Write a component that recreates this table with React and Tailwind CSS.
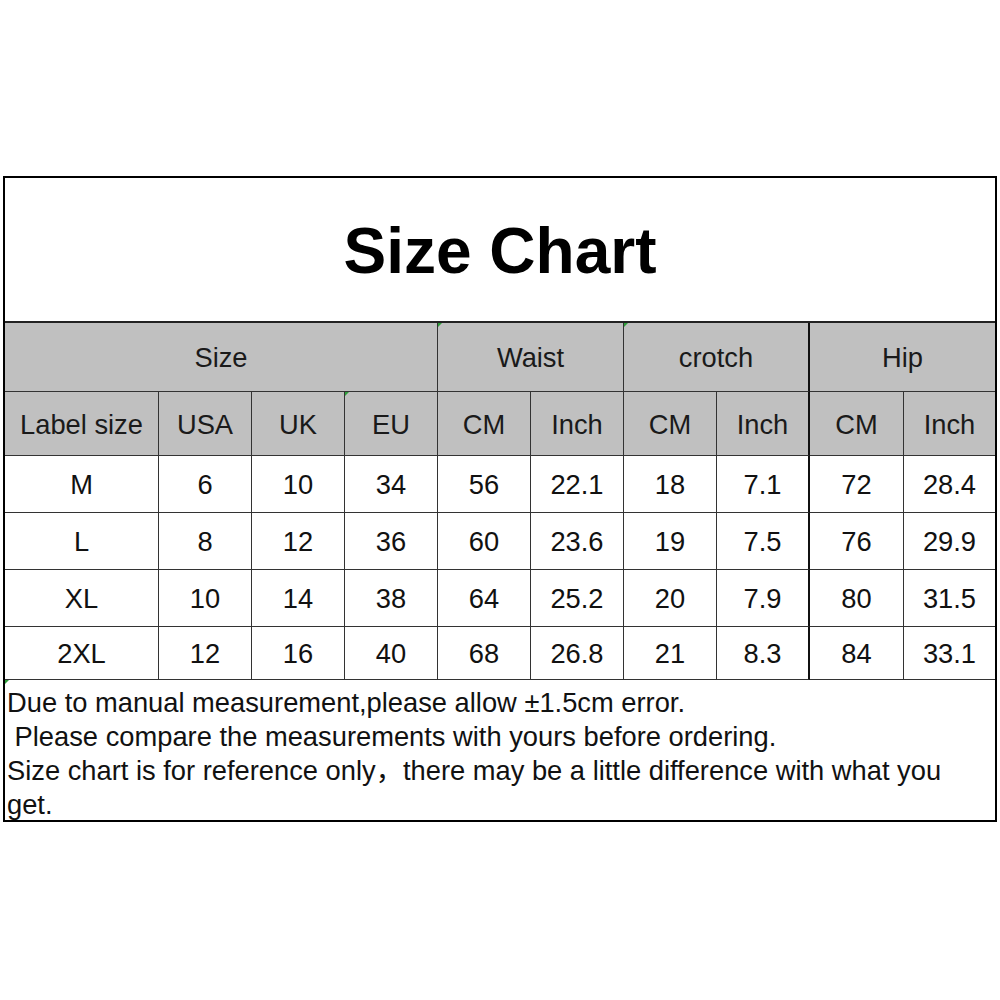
import React from 'react';

const cols = 'grid grid-cols-[154px_93px_93px_93px_93px_93px_93px_93px_94px_1fr]';

// Sub-header labels of the second header row
const subHeads = ['Label size', 'USA', 'UK', 'EU', 'CM', 'Inch', 'CM', 'Inch', 'CM', 'Inch'];

const rows = [
  { h: 'h-[57px]', v: ['M', '6', '10', '34', '56', '22.1', '18', '7.1', '72', '28.4'] },
  { h: 'h-[57px]', v: ['L', '8', '12', '36', '60', '23.6', '19', '7.5', '76', '29.9'] },
  { h: 'h-[57px]', v: ['XL', '10', '14', '38', '64', '25.2', '20', '7.9', '80', '31.5'] },
  { h: 'h-[53px]', v: ['2XL', '12', '16', '40', '68', '26.8', '21', '8.3', '84', '33.1'] },
];

// Tiny green spreadsheet comment marker
const Mark = () => (
  <span className="absolute left-0 top-0 w-0 h-0 border-t-[4px] border-r-[4px] border-t-[#2e9d3a] border-r-transparent" />
);

function cellBorder(i) {
  if (i === 9) return '';
  if (i === 7) return 'border-r-2 border-r-[#111]';
  return 'border-r border-r-[#333]';
}

export default function App() {
  return (
    <div className="w-[1000px] h-[1000px] bg-white pt-[176px] pl-[3px] font-['Liberation_Sans',Arial,'Noto_Sans_CJK_SC',sans-serif] text-[#111]">
      <div className="w-[994px] border-2 border-black">
        {/* Title */}
        <div className="h-[145px] border-b-2 border-[#222] flex items-center justify-center pt-[2px]">
          <h1 className="text-[64px] font-bold leading-none text-black">Size Chart</h1>
        </div>

        {/* Group header */}
        <div className={`${cols} h-[69px] bg-[#c0c0c0] text-[27.3px] text-[#1a1a1a]`}>
          <div className="col-span-4 flex items-center justify-center pt-[3px] border-r border-b border-[#333]">Size</div>
          <div className="relative col-span-2 flex items-center justify-center pt-[3px] border-r border-b border-[#333]">
            <Mark />
            Waist
          </div>
          <div className="relative col-span-2 flex items-center justify-center pt-[3px] border-r-2 border-r-[#111] border-b border-b-[#333]">
            <Mark />
            crotch
          </div>
          <div className="col-span-2 flex items-center justify-center pt-[3px] border-b border-[#333]">Hip</div>
        </div>

        {/* Sub header */}
        <div className={`${cols} h-[64px] bg-[#c0c0c0] text-[27.3px] text-[#1a1a1a]`}>
          {subHeads.map((s, i) => (
            <div
              key={i}
              className={`relative flex items-center justify-center pt-[4px] border-b border-b-[#333] ${cellBorder(i)}`}
            >
              {i === 3 && <Mark />}
              {s}
            </div>
          ))}
        </div>

        {/* Data rows */}
        {rows.map((r, ri) => (
          <div key={ri} className={`${cols} ${r.h} text-[27.3px]`}>
            {r.v.map((v, i) => (
              <div
                key={i}
                className={`flex items-center justify-center pt-[3px] border-b border-b-[#333] ${cellBorder(i)}`}
              >
                {v}
              </div>
            ))}
          </div>
        ))}

        {/* Notes */}
        <div className="relative h-[140px] pt-[6px] pl-[2px] text-[27.3px] leading-[34px] text-[#111]">
          <Mark />
          <div>Due to manual measurement,please allow ±1.5cm error.</div>
          <div className="whitespace-pre"> Please compare the measurements with yours before ordering.</div>
          <div>Size chart is for reference only，there may be a little difference with what you</div>
          <div>get.</div>
        </div>
      </div>
    </div>
  );
}
